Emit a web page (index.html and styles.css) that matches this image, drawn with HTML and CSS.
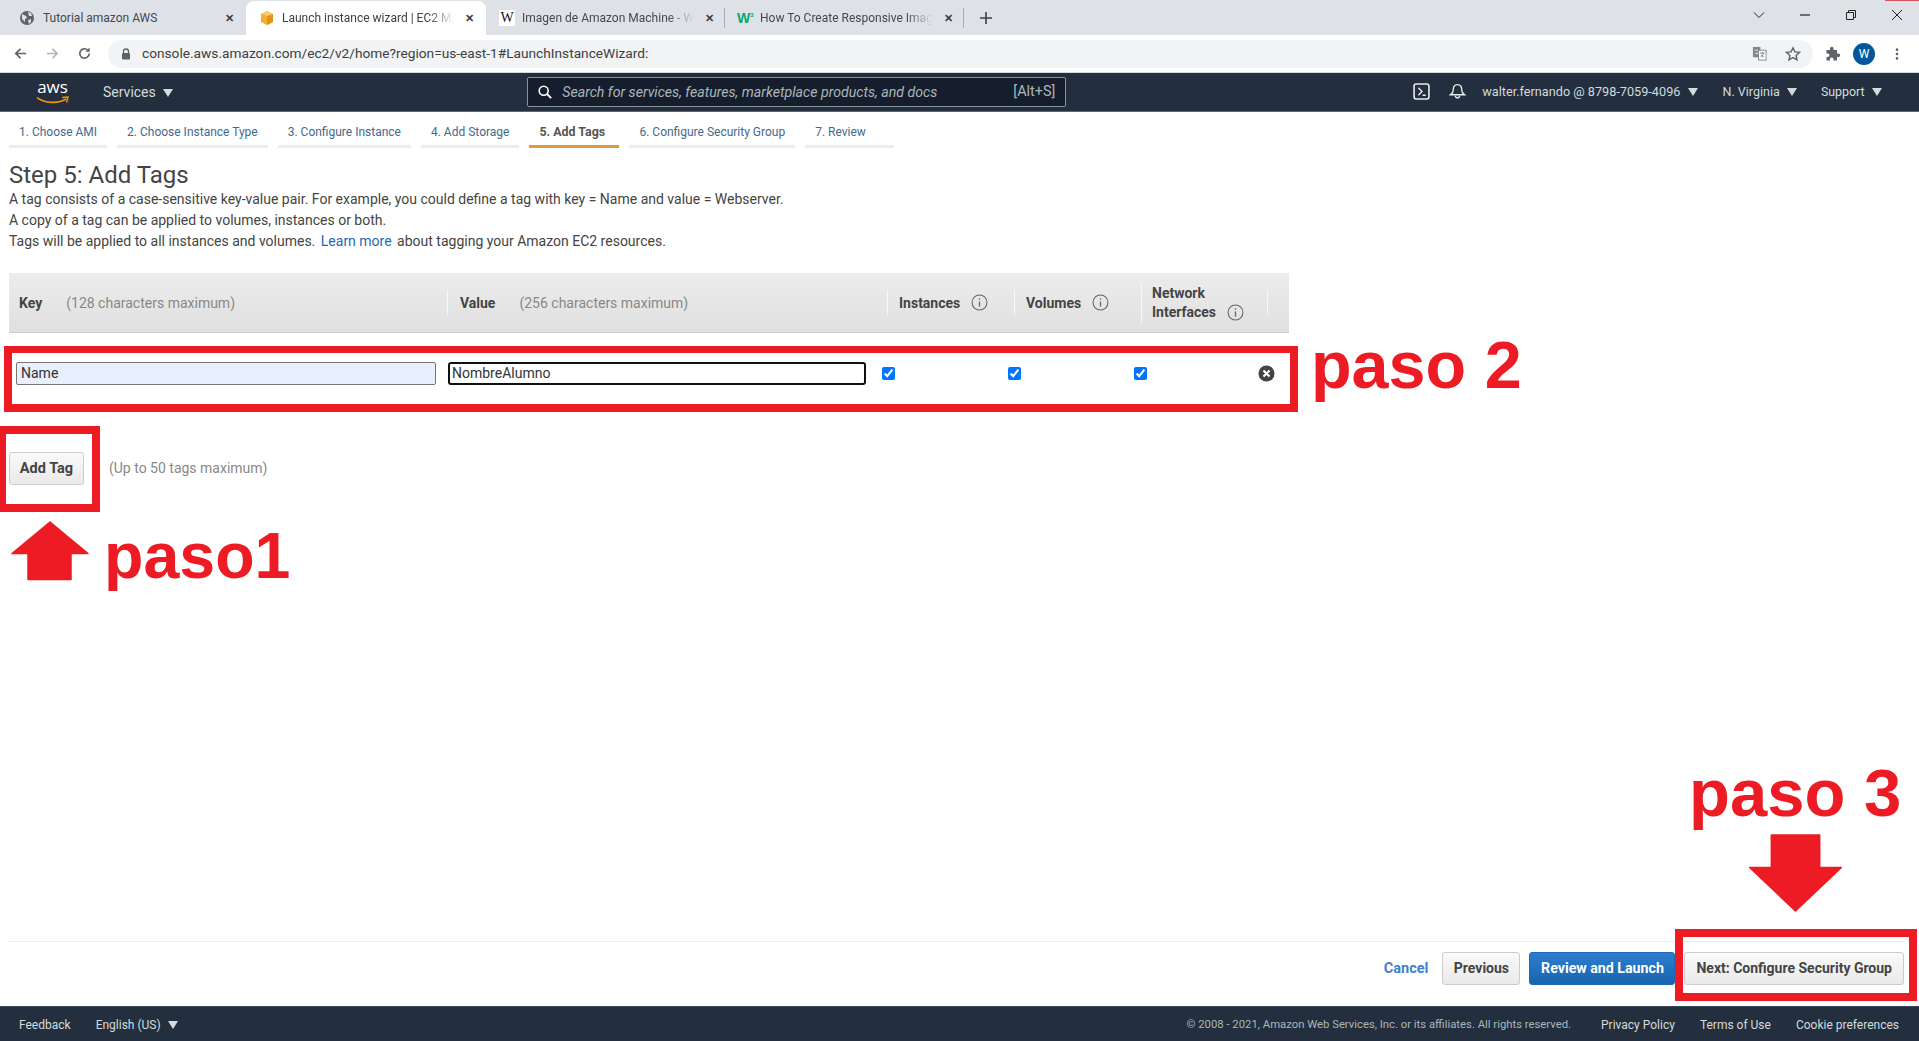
FILE: index.html
```html
<!DOCTYPE html>
<html lang="en">
<head>
<meta charset="UTF-8">
<title>Launch instance wizard | EC2 Management Console</title>
<link rel="stylesheet" href="styles.css">
</head>
<body>

<!-- browser tabs -->
<div class="tabstrip">
    <div class="tab tab-first">
        <svg class="favicon" viewBox="0 0 16 16"><circle cx="8" cy="8" r="7" fill="#5f6368"/><path d="M3 4l4 2 1 2-2 1v3L3 9zM9 2l3 1 1 3-3 0zM9 10l3-1 0 3-2 2z" fill="#dee1e6"/></svg>
        <span class="tab-title tab-title-full">Tutorial amazon AWS</span>
        <span class="tab-close">✕</span>
    </div>
    <div class="tab tab-active">
        <svg class="favicon" viewBox="0 0 16 16"><path d="M2 4l6-3 6 3v8l-6 3-6-3z" fill="#f2ae2e"/><path d="M8 6v9l6-3V4z" fill="#e0941a"/><path d="M2 4l6 2 6-2-6-3z" fill="#f9c963"/></svg>
        <span class="tab-title">Launch instance wizard | EC2 Ma</span>
        <span class="tab-close">✕</span>
    </div>
    <div class="tab tab-wiki">
        <span class="favicon wiki">W</span>
        <span class="tab-title">Imagen de Amazon Machine - W</span>
        <span class="tab-close">✕</span>
    </div>
    <div class="tab tab-sep">
        <span class="favicon w3">W<sup>3</sup></span>
        <span class="tab-title">How To Create Responsive Image</span>
        <span class="tab-close">✕</span>
    </div>
    <svg class="newtab" viewBox="0 0 14 14"><path d="M7 1v12M1 7h12" stroke="#3c4043" stroke-width="1.6"/></svg>
    <div class="winctl">
        <svg viewBox="0 0 12 12" class="win-chevron"><path d="M1 3.5l5 5 5-5" fill="none" stroke="#222" stroke-width="1"/></svg>
        <svg viewBox="0 0 12 12" class="win-min"><path d="M1 6h10" stroke="#222" stroke-width="1.2"/></svg>
        <svg viewBox="0 0 12 12" class="win-max"><path d="M1.5 3.5h7v7h-7zM3.5 3.5v-2h7v7h-2" fill="none" stroke="#222" stroke-width="1"/></svg>
        <svg viewBox="0 0 12 12" class="win-close"><path d="M1 1l10 10M11 1L1 11" stroke="#222" stroke-width="1"/></svg>
    </div>
    <div class="redbit"></div>
</div>

<!-- address bar -->
<div class="addressbar">
    <svg class="tool tool-back" viewBox="0 0 16 16"><path d="M14 8H3M8 3L3 8l5 5" fill="none" stroke="#5f6368" stroke-width="1.8"/></svg>
    <svg class="tool tool-fwd" viewBox="0 0 16 16"><path d="M2 8h11M8 3l5 5-5 5" fill="none" stroke="#b4b7bb" stroke-width="1.8"/></svg>
    <svg class="tool tool-reload" viewBox="0 0 16 16"><path d="M13 8a5 5 0 1 1-1.5-3.6" fill="none" stroke="#5f6368" stroke-width="1.8"/><path d="M13.5 1.5v4.5H9z" fill="#5f6368"/></svg>
    <div class="urlpill">
        <svg class="lock" viewBox="0 0 10 12"><path d="M2.5 5V3.500a2.500 2.500 0 0 1 5 0V5" fill="none" stroke="#5f6368" stroke-width="1.3"/><rect x="1" y="5" width="8" height="6.500" rx="1" fill="#5f6368"/></svg>
        <span class="url">console.aws.amazon.com/ec2/v2/home?region=us-east-1#LaunchInstanceWizard:</span>
        <svg class="translate" viewBox="0 0 16 16"><rect x="1" y="1" width="8" height="11" fill="#80868b"/><path d="M3 4.500h3.500M3.500 8h3v-2" fill="none" stroke="#fff" stroke-width=".8"/><rect x="7" y="4.500" width="8" height="10.500" fill="#fff" stroke="#80868b"/><path d="M8.500 7.500h5M11 6.500v1M12.500 7.500c-.5 2-2 3.500-3.500 4.500M9.500 9c.7 1.300 1.800 2.300 3.300 3" stroke="#5f6368" fill="none" stroke-width=".8"/></svg>
        <svg class="star" viewBox="0 0 16 16"><path d="M8 1.800l1.900 4.100 4.500.5-3.300 3 .9 4.400L8 11.600l-4 2.200.9-4.400-3.300-3 4.500-.5z" fill="none" stroke="#5f6368" stroke-width="1.400"/></svg>
    </div>
    <svg class="puzzle" viewBox="0 0 16 16"><path d="M6 2.500a1.800 1.800 0 0 1 3.600 0V4H13v3.400h1.300a1.800 1.800 0 0 1 0 3.600H13v3.500H9.500v-1.300a1.800 1.800 0 0 0-3.600 0v1.300H2.500V11h1.200a1.800 1.800 0 0 0 0-3.600H2.500V4H6z" fill="#5f6368"/></svg>
    <span class="avatar">W</span>
    <svg class="dots" viewBox="0 0 4 16"><circle cx="2" cy="3" r="1.500" fill="#5f6368"/><circle cx="2" cy="8" r="1.500" fill="#5f6368"/><circle cx="2" cy="13" r="1.500" fill="#5f6368"/></svg>
</div>

<!-- aws console nav -->
<div class="navbar">
    <div class="aws-logo">
        <span class="aws-word">aws</span>
        <svg class="aws-smile" viewBox="0 0 34 9"><path d="M1 1.500c8 6 22 6.500 30 1.500" fill="none" stroke="#f79400" stroke-width="1.800"/><path d="M27 1.500l6-.5-1.500 5.500" fill="none" stroke="#f79400" stroke-width="1.500"/></svg>
    </div>
    <span class="nav-item nav-services">Services <i class="caret"></i></span>
    <div class="searchbox">
        <svg class="search-icon" viewBox="0 0 14 14"><circle cx="5.700" cy="5.700" r="4.500" fill="none" stroke="#fff" stroke-width="1.600"/><path d="M9 9l4.200 4.200" stroke="#fff" stroke-width="1.800"/></svg>
        <span class="search-text">Search for services, features, marketplace products, and docs</span>
        <span class="search-key">[Alt+S]</span>
    </div>
    <svg class="term-icon" viewBox="0 0 16 16"><rect x="1" y="1" width="14" height="14" rx="2" fill="none" stroke="#eaeded" stroke-width="1.500"/><path d="M5 4.500l3.500 3.500L5 11.500M9 11.500h3" fill="none" stroke="#eaeded" stroke-width="1.300"/></svg>
    <svg class="bell-icon" viewBox="0 0 16 16"><path d="M8 1.500c-3 0-4 2.500-4 5 0 2-1 3.500-2.500 4.500h13C13 10 12 8.500 12 6.500c0-2.500-1-5-4-5z" fill="none" stroke="#eaeded" stroke-width="1.300"/><path d="M6 12a2 2 0 0 0 4 0" fill="none" stroke="#eaeded" stroke-width="1.300"/></svg>
    <span class="nav-item nav-user">walter.fernando @ 8798-7059-4096 <i class="caret"></i></span>
    <span class="nav-item nav-region">N. Virginia <i class="caret"></i></span>
    <span class="nav-item nav-support">Support <i class="caret"></i></span>
</div>

<!-- wizard steps -->
<div class="steps">
    <a class="step">1. Choose AMI</a>
    <a class="step">2. Choose Instance Type</a>
    <a class="step">3. Configure Instance</a>
    <a class="step">4. Add Storage</a>
    <a class="step step-current">5. Add Tags</a>
    <a class="step">6. Configure Security Group</a>
    <a class="step step-last">7. Review</a>
</div>

<h1>Step 5: Add Tags</h1>
<p class="intro">A tag consists of a case-sensitive key-value pair. For example, you could define a tag with key = Name and value = Webserver.</p>
<p class="intro">A copy of a tag can be applied to volumes, instances or both.</p>
<p class="intro">Tags will be applied to all instances and volumes. <a class="link">Learn more</a> about tagging your Amazon EC2 resources.</p>

<div class="tag-head">
    <div class="head-cell"><b>Key</b><span class="hint hint-col">(128 characters maximum)</span></div>
    <div class="head-cell head-div"><b>Value</b><span class="hint hint-col">(256 characters maximum)</span></div>
    <div class="head-cell head-div head-check"><b>Instances</b><svg class="info" viewBox="0 0 16 16"><circle cx="8" cy="8" r="7" fill="none" stroke="#666"/><path d="M8 7v5M8 4v1.500" stroke="#666" stroke-width="1.200"/></svg></div>
    <div class="head-cell head-div head-check"><b>Volumes</b><svg class="info" viewBox="0 0 16 16"><circle cx="8" cy="8" r="7" fill="none" stroke="#666"/><path d="M8 7v5M8 4v1.500" stroke="#666" stroke-width="1.200"/></svg></div>
    <div class="head-cell head-div head-net"><b>Network<br>Interfaces<svg class="info" viewBox="0 0 16 16"><circle cx="8" cy="8" r="7" fill="none" stroke="#666"/><path d="M8 7v5M8 4v1.500" stroke="#666" stroke-width="1.200"/></svg></b></div>
    <div class="head-cell head-div head-end"></div>
</div>

<div class="tag-row">
    <input class="tag-input tag-key" type="text" value="Name">
    <input class="tag-input tag-value" type="text" value="NombreAlumno">
    <input class="tag-check" type="checkbox" checked>
    <input class="tag-check" type="checkbox" checked>
    <input class="tag-check" type="checkbox" checked>
    <svg class="tag-remove" viewBox="0 0 18 18"><circle cx="9" cy="9" r="8.500" fill="#444"/><path d="M5.800 5.800l6.400 6.400M12.200 5.800l-6.400 6.400" stroke="#fff" stroke-width="2.200"/></svg>
</div>

<div class="add-row">
    <button class="btn btn-add">Add Tag</button>
    <span class="hint">(Up to 50 tags maximum)</span>
</div>

<div class="actions">
    <a class="cancel">Cancel</a>
    <button class="btn btn-prev">Previous</button>
    <button class="btn btn-primary">Review and Launch</button>
    <button class="btn">Next: Configure Security Group</button>
</div>

<div class="footer">
    <span class="foot-feedback">Feedback</span>
    <span class="foot-lang">English (US) <i class="caret"></i></span>
    <span class="foot-copy">© 2008 - 2021, Amazon Web Services, Inc. or its affiliates. All rights reserved.</span>
    <span class="foot-link foot-privacy">Privacy Policy</span>
    <span class="foot-link foot-terms">Terms of Use</span>
    <span class="foot-link foot-cookie">Cookie preferences</span>
</div>

<!-- red annotations drawn over the screenshot -->
<div class="mark mark-row"></div>
<div class="mark mark-add"></div>
<div class="mark mark-next"></div>
<span class="paso paso-2">paso 2</span>
<span class="paso paso-1">paso1</span>
<span class="paso paso-3">paso 3</span>
<svg class="arrow arrow-up" viewBox="0 0 79 60"><path d="M39 1L77 32.500H60V58.500H17V32.500H1z" fill="#ed1c24" stroke="#ed1c24" stroke-linejoin="round" stroke-width="1.500"/></svg>
<svg class="arrow arrow-down" viewBox="0 0 95 79"><path d="M23 1h49v33h22L47.500 78 1 34h22z" fill="#ed1c24" stroke="#ed1c24" stroke-linejoin="round" stroke-width="1.500"/></svg>

</body>
</html>
```

FILE: styles.css
```css
* {
    box-sizing: border-box;
}

html, body {
    margin: 0;
    padding: 0;
}

body {
    position: relative;
    height: 1041px;
    overflow: hidden;
    display: flex;
    flex-direction: column;
    background-color: #fff;
    font-family: Roboto, "Liberation Sans", sans-serif;
    font-size: 14px;
    color: #444;
}

/* browser tabs */
.tabstrip {
    position: relative;
    height: 35px;
    flex: none;
    display: flex;
    align-items: flex-end;
    padding-left: 6px;
    background-color: #dee1e6;
}

.tab {
    position: relative;
    width: 240px;
    height: 34px;
    display: flex;
    align-items: center;
    padding-left: 13px;
    font-size: 12px;
    color: #45494e;
}

.tab-active {
    background-color: #fff;
    border-radius: 8px 8px 0 0;
    color: #3c4043;
}

.tab-wiki {
    width: 238px;
}

.tab-sep {
    border-left: 1px solid #a9adb2;
    border-right: 1px solid #a9adb2;
    height: 20px;
    margin-bottom: 7px;
    padding-left: 12px;
}

.favicon {
    width: 16px;
    height: 16px;
    flex: none;
    margin-right: 7px;
}

.tab-first .favicon {
    margin-right: 8px;
}

.wiki {
    background-color: #fff;
    font-family: "Liberation Serif", serif;
    font-size: 14px;
    line-height: 16px;
    text-align: center;
    color: #111;
}

.w3 {
    font-family: "Liberation Sans", sans-serif;
    font-weight: bold;
    font-size: 14px;
    line-height: 16px;
    color: #04aa6d;
}

.w3 sup {
    font-size: 6px;
    color: #04aa6d;
    vertical-align: 6px;
    line-height: 0;
}

.tab-title {
    width: 172px;
    flex: none;
    white-space: nowrap;
    -webkit-mask-image: linear-gradient(to right, #000 85%, transparent);
    mask-image: linear-gradient(to right, #000 85%, transparent);
}

.tab-first .tab-title {
    width: 171px;
}

.tab-title-full {
    -webkit-mask-image: none;
    mask-image: none;
}

.tab-close {
    margin-left: 11px;
    font-size: 11px;
    font-weight: bold;
    color: #3c4043;
}

.tab-sep .tab-close {
    margin-left: 12px;
}

.newtab {
    width: 14px;
    height: 14px;
    margin: 0 0 10px 15px;
}

.winctl {
    margin-left: auto;
    display: flex;
    align-self: flex-start;
    align-items: center;
    height: 30px;
    padding-right: 16px;
}

.winctl svg {
    width: 12px;
    height: 12px;
}

.win-chevron {
    margin-right: 34px;
}

.win-min {
    margin-right: 34px;
}

.win-max {
    margin-right: 34px;
}

.redbit {
    position: absolute;
    right: 0;
    top: 0;
    width: 34px;
    height: 1px;
    background-color: #d9545f;
}

/* address bar */
.addressbar {
    height: 37px;
    flex: none;
    display: flex;
    align-items: center;
    padding-left: 13px;
    background-color: #fff;
}

.tool {
    width: 15px;
    height: 15px;
    flex: none;
    margin-right: 17px;
}

.tool-reload {
    margin-right: 16px;
}

.urlpill {
    width: 1705px;
    height: 28px;
    flex: none;
    display: flex;
    align-items: center;
    padding-left: 13px;
    background-color: #f1f3f4;
    border-radius: 14px;
}

.lock {
    width: 10px;
    height: 12px;
    margin-right: 11px;
}

.url {
    padding-bottom: 1px;
    font-size: 13.7px;
    color: #3c4043;
}

.translate {
    width: 15px;
    height: 15px;
    margin-left: auto;
}

.star {
    width: 16px;
    height: 16px;
    margin: 0 12px 0 18px;
}

.puzzle {
    width: 16px;
    height: 16px;
    margin-left: 11px;
}

.avatar {
    width: 22px;
    height: 22px;
    margin-left: 13px;
    border-radius: 50%;
    background-color: #01579b;
    color: #fff;
    font-size: 12px;
    line-height: 22px;
    text-align: center;
}

.dots {
    width: 4px;
    height: 14px;
    margin-left: 20px;
}

/* aws nav */
.navbar {
    height: 40px;
    flex: none;
    display: flex;
    align-items: center;
    padding-bottom: 1px;
    background-color: #232f3e;
    border-bottom: 1px solid #5b6673;
    border-top: 1px solid #d5d8dc;
    color: #d5dbdb;
}

.aws-logo {
    position: relative;
    width: 33px;
    height: 30px;
    margin-left: 36px;
    text-align: center;
}

.aws-word {
    display: block;
    font-family: "Open Sans", sans-serif;
    font-size: 17px;
    line-height: 20px;
    color: #fff;
}

.aws-smile {
    position: absolute;
    left: 0;
    top: 19px;
    width: 33px;
    height: 9px;
}

.nav-item {
    font-size: 12.7px;
    white-space: nowrap;
}

.caret {
    display: inline-block;
    width: 0;
    height: 0;
    margin-left: 4px;
    border-left: 5px solid transparent;
    border-right: 5px solid transparent;
    border-top: 8px solid #d5dbdb;
}

.nav-services {
    margin-left: 34px;
    font-size: 14px;
}

.searchbox {
    width: 539px;
    height: 30px;
    margin-left: 354px;
    flex: none;
    display: flex;
    align-items: center;
    padding: 0 10px 0 10px;
    background-color: #161e2d;
    border: 1px solid #879596;
    border-radius: 2px;
}

.search-icon {
    width: 14px;
    height: 14px;
    margin-right: 10px;
}

.search-text {
    font-size: 14.15px;
    font-style: italic;
    color: #aab7b8;
}

.search-key {
    margin-left: auto;
    font-size: 14.4px;
    color: #aab7b8;
}

.term-icon {
    width: 17px;
    height: 17px;
    margin-left: 347px;
}

.bell-icon {
    width: 17px;
    height: 17px;
    margin-left: 19px;
}

.nav-user {
    margin-left: 16px;
}

.nav-region {
    margin-left: 25px;
    font-size: 12.5px;
}

.nav-support {
    margin-left: 24px;
    font-size: 12.4px;
}

/* wizard steps */
.steps {
    height: 36px;
    flex: none;
    display: flex;
    gap: 10px;
    padding-left: 9px;
}

.step {
    padding: 9px 10px 0;
    border-bottom: 3px solid #eaeded;
    font-size: 12px;
    line-height: 22px;
    color: #44698e;
}

.step-current {
    width: 90px;
    border-bottom-color: #dd9d3e;
    font-size: 12.4px;
    font-weight: bold;
    white-space: nowrap;
    color: #555;
}

.step-last {
    width: 89px;
}

h1 {
    margin: 14px 0 0 9px;
    font-size: 24px;
    font-weight: 400;
    line-height: 27px;
    color: #444;
}

.intro {
    margin: 0 0 0 9px;
    font-size: 14px;
    line-height: 21px;
    color: #444;
}

.link {
    color: #1a6bb5;
    margin: 0 2px;
}

/* tags table */
.tag-head {
    width: 1280px;
    height: 60px;
    flex: none;
    margin: 21px 0 0 9px;
    display: grid;
    grid-template-columns: 438px 440px 127px 127px 126px 22px;
    align-items: center;
    background: linear-gradient(#ececec, #e0e0e0);
    border-bottom: 1px solid #ccc;
}

.head-cell {
    display: flex;
    align-items: center;
    height: 25px;
    padding-left: 10px;
    font-size: 14px;
    color: #444;
}

.head-div {
    border-left: 1px solid #f8f8f8;
    padding-left: 12px;
}

.head-check {
    padding-left: 11px;
}

.head-net {
    height: 40px;
    padding-left: 10px;
    line-height: 19px;
}

.head-end {
    padding: 0;
}

.hint {
    color: #888;
}

.hint-col {
    margin-left: 24px;
}

.info {
    width: 17px;
    height: 17px;
    margin-left: 11px;
    vertical-align: -4px;
}

.tag-row {
    width: 1280px;
    height: 23px;
    flex: none;
    margin: 29px 0 0 16px;
    display: flex;
    align-items: center;
}

.tag-input {
    height: 23px;
    padding: 0 3px 2px;
    font-family: Roboto, sans-serif;
    font-size: 14px;
    color: #333;
    outline: none;
}

.tag-key {
    width: 420px;
    padding-left: 4px;
    background-color: #e8f0fe;
    border: 1px solid #767676;
    border-radius: 2px;
}

.tag-value {
    width: 418px;
    margin-left: 12px;
    padding-left: 2px;
    background-color: #fff;
    border: 2px solid #101010;
    border-radius: 3px;
}

.tag-check {
    width: 13px;
    height: 13px;
    margin: 0 113px 0 0;
    flex: none;
}

.tag-value + .tag-check {
    margin-left: 16px;
}

.tag-remove {
    width: 17px;
    height: 17px;
    margin-left: -2px;
}

.add-row {
    height: 32px;
    flex: none;
    margin: 67px 0 0 9px;
    display: flex;
    align-items: center;
}

.btn {
    height: 33px;
    padding: 0 11px 2px;
    background: linear-gradient(#fafafa, #e9e9e9);
    border: 1px solid #ccc;
    border-radius: 3px;
    font-family: Roboto, sans-serif;
    font-size: 14px;
    font-weight: bold;
    color: #444;
}

.btn-add {
    width: 75px;
    padding: 0;
    font-size: 14.5px;
    white-space: nowrap;
}

.btn-prev {
    width: 78px;
    padding: 0 0 2px;
}

.add-row .hint {
    margin-left: 25px;
}

/* bottom buttons */
.actions {
    margin: auto 15px 0 9px;
    height: 65px;
    flex: none;
    display: flex;
    align-items: flex-start;
    justify-content: flex-end;
    padding-top: 10px;
    border-top: 1px solid #eaeded;
}

.cancel {
    margin: 8px 14px 0 0;
    font-size: 14.5px;
    font-weight: bold;
    color: #3f7fd1;
}

.btn-primary {
    width: 146px;
    margin: 0 9px;
    padding: 0 0 2px;
    background: linear-gradient(#2b7fd0, #1a63ad);
    border-color: #1d69b5;
    font-size: 14.2px;
    white-space: nowrap;
    color: #fff;
}

/* footer */
.footer {
    height: 35px;
    flex: none;
    display: flex;
    align-items: center;
    padding-top: 1px;
    background-color: #232f3e;
    border-top: 1px solid #3b4654;
    font-size: 12px;
    color: #d5dbdb;
}

.foot-feedback {
    margin-left: 19px;
}

.foot-lang {
    margin-left: 25px;
}

.foot-copy {
    margin-left: auto;
    font-size: 11.3px;
    color: #aab7b8;
}

.foot-privacy {
    margin-left: 30px;
}

.foot-terms {
    margin-left: 25px;
}

.foot-cookie {
    margin-left: 25px;
    margin-right: 20px;
}

/* annotations */
.mark {
    position: absolute;
    border-style: solid;
    border-color: #ed1c24;
}

.mark-row {
    left: 4px;
    top: 346px;
    width: 1294px;
    height: 66px;
    border-width: 7px 8px 8px;
}

.mark-add {
    left: 0;
    top: 426px;
    width: 100px;
    height: 86px;
    border-width: 8px;
    border-left-width: 6px;
}

.mark-next {
    left: 1675px;
    top: 929px;
    width: 242px;
    height: 72px;
    border-width: 8px;
}

.paso {
    position: absolute;
    font-family: "Liberation Sans", sans-serif;
    font-weight: bold;
    line-height: 68px;
    color: #ed1c24;
}

.paso-2 {
    left: 1311px;
    top: 331px;
    font-size: 66.5px;
}

.paso-1 {
    left: 104px;
    top: 522px;
    font-size: 64.5px;
}

.paso-3 {
    left: 1689px;
    top: 759px;
    font-size: 67px;
}

.arrow {
    position: absolute;
}

.arrow-up {
    left: 11px;
    top: 521px;
    width: 79px;
    height: 60px;
}

.arrow-down {
    left: 1748px;
    top: 834px;
    width: 95px;
    height: 78px;
}
```
